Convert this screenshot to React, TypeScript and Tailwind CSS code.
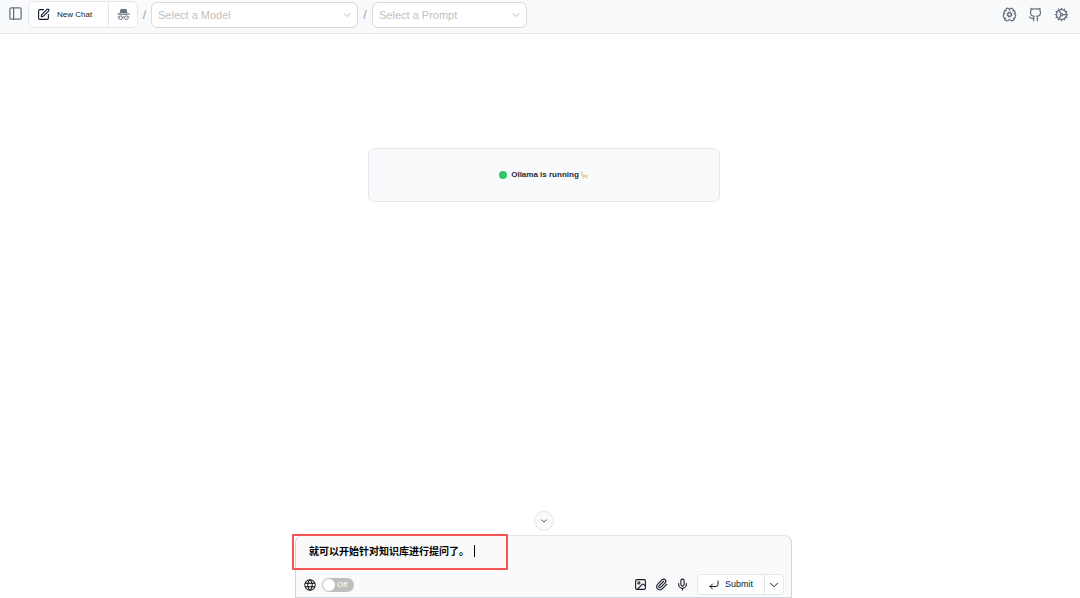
import {
  BrainCog,
  ChevronDown,
  Cog,
  CornerDownLeft,
  Github,
  Image,
  Mic,
  PanelLeft,
  Paperclip,
  SquarePen,
} from "lucide-react";
import { PiGlobe } from "react-icons/pi";

function ModelSelect({ label, className }: { label: string; className: string }) {
  return (
    <div className={`relative h-[26px] ${className}`}>
      <select
        aria-label={label}
        className="h-full w-full appearance-none rounded-md border border-[#d9d9d9] bg-white pl-1.5 pr-6 text-[11px] text-[#bfbfbf]"
      >
        <option>{label}</option>
      </select>
      <ChevronDown
        className="pointer-events-none absolute right-[5px] top-[7px] h-3 w-3 text-[#b0b0b0]"
        strokeWidth={1.7}
      />
    </div>
  );
}

// Hat and glasses
function Incognito() {
  return (
    <svg viewBox="0 0 24 24" className="h-[13px] w-[13px]" aria-hidden="true">
      <path
        d="M6.5 2.2c.4-1 1.1-1.2 2-.9 2.2.7 4.8.7 7 0 .9-.3 1.6-.1 2 .9L19.4 9H4.6zM1 10.2h22v2.4H1z"
        fill="currentColor"
      />
      <g fill="none" stroke="currentColor" strokeWidth="1.8">
        <circle cx="6.7" cy="18" r="3.4" />
        <circle cx="17.3" cy="18" r="3.4" />
        <path d="M1.5 16.5h2.5M20 16.5h2.5M10 17.3c1.2-.9 2.8-.9 4 0" />
      </g>
    </svg>
  );
}

function Header() {
  return (
    <header className="flex h-[34px] items-center justify-between border-b border-gray-200 bg-gray-50 pb-1 pl-2 pr-[11px] text-gray-500">
      <div className="flex items-center">
        <button aria-label="Toggle sidebar" className="mb-[2px] mr-[5px]">
          <PanelLeft className="h-[15px] w-[15px]" />
        </button>
        <div className="flex h-[27px] w-[110px] rounded-md border border-gray-200 bg-white">
          <button className="flex w-20 items-center gap-[7px] border-r border-gray-200 pl-2 text-[8px] text-gray-900">
            <SquarePen className="h-[13px] w-[13px]" />
            New Chat
          </button>
          <button aria-label="Temporary chat" className="flex w-7 items-center justify-center">
            <Incognito />
          </button>
        </div>
        <span className="w-[13px] text-center text-xs text-gray-400">/</span>
        <ModelSelect label="Select a Model" className="w-[207px]" />
        <span className="w-[14px] text-center text-xs text-gray-400">/</span>
        <ModelSelect label="Select a Prompt" className="w-[155px]" />
      </div>
      <nav className="flex items-center gap-[11px]">
        <a href="#knowledge" aria-label="Knowledge">
          <BrainCog className="h-[15px] w-[15px]" />
        </a>
        <a href="#github" aria-label="GitHub">
          <Github className="h-[15px] w-[15px]" />
        </a>
        <a href="#settings" aria-label="Settings">
          <Cog className="h-[15px] w-[15px]" />
        </a>
      </nav>
    </header>
  );
}

// Small llama drawn next to the status text
function Llama() {
  return (
    <svg viewBox="0 0 16 16" className="h-2 w-2 shrink-0" aria-hidden="true">
      <path
        d="M2.5 0l1 1.4L5 .3l.6 7.2 6.4.6 2-1.6 1.2 1.7-.9 2V16h-1.7l-.5-4H7.4L7 16H5.2l-.4-4.5L3 8.5 2.8 4.6.4 4.4.6 2.6l1.7-.8z"
        fill="#e3cf9c"
      />
    </svg>
  );
}

function OllamaStatus() {
  return (
    <div className="flex h-[54px] w-[352px] items-center justify-center rounded-md border border-gray-200 bg-gray-50 text-[8px] font-bold text-gray-800">
      <span className="mr-1 h-2 w-2 rounded-full bg-[#2dc766]" />
      <span className="mr-px">Ollama is running</span>
      <Llama />
    </div>
  );
}

function ChatForm() {
  return (
    <form className="relative flex h-[63px] w-[497px] flex-col justify-between rounded-t-lg border border-gray-300 border-t-gray-200 bg-[#fafafa]">
      <textarea
        aria-label="Message"
        rows={1}
        defaultValue="就可以开始针对知识库进行提问了。"
        className="ml-[13px] mt-2 h-4 w-[180px] resize-none overflow-hidden bg-transparent text-[10px] leading-4 font-bold text-black outline-none"
      />
      <span className="absolute left-[178px] top-[9px] h-3 w-px bg-black" />
      <div className="pointer-events-none absolute -left-1 -top-[2px] h-9 w-[216px] border-2 border-[#f75555]" />
      <div className="mb-[2px] flex items-center justify-between pl-[7px] pr-[7px]">
        <div className="flex items-center gap-[5px]">
          <PiGlobe className="h-[14px] w-[14px] text-black" />
          <button
            type="button"
            role="switch"
            aria-checked="false"
            aria-label="Internet search"
            className="flex h-[14px] w-8 items-center gap-[2px] rounded-full bg-[#bfbfbf] pl-px text-[8px] text-white"
          >
            <span className="h-3 w-3 rounded-full bg-white" />
            Off
          </button>
        </div>
        <div className="flex items-center text-gray-900">
          <button type="button" aria-label="Add image" className="mr-2">
            <Image className="h-[13px] w-[13px]" />
          </button>
          <button type="button" aria-label="Attach file" className="mr-2">
            <Paperclip className="h-[13px] w-[13px]" />
          </button>
          <button type="button" aria-label="Voice input" className="mr-2">
            <Mic className="h-[13px] w-[13px]" />
          </button>
          <div className="flex h-[21px] rounded border border-gray-200 bg-white">
            <button
              type="submit"
              className="flex w-[67px] items-center gap-[5px] border-r border-gray-200 pl-2.5 text-[9px]"
            >
              <CornerDownLeft className="h-3 w-3" />
              Submit
            </button>
            <button type="button" aria-label="More options" className="flex w-[18px] items-center justify-center">
              <ChevronDown className="h-[14px] w-[14px]" strokeWidth={1.7} />
            </button>
          </div>
        </div>
      </div>
    </form>
  );
}

export default function App() {
  return (
    <div className="flex min-h-screen flex-col bg-white font-['Liberation_Sans','Noto_Sans_CJK_SC',sans-serif]">
      <Header />
      <main className="flex flex-1 flex-col items-center justify-between pl-[7px] pt-[114px]">
        <OllamaStatus />
        <div className="flex flex-col items-center gap-1">
          <button
            aria-label="Scroll to bottom"
            className="flex h-5 w-5 items-center justify-center rounded-full border border-gray-200 bg-gray-50 text-gray-600"
          >
            <ChevronDown className="h-[10px] w-[10px]" strokeWidth={2.4} />
          </button>
          <ChatForm />
        </div>
      </main>
    </div>
  );
}
